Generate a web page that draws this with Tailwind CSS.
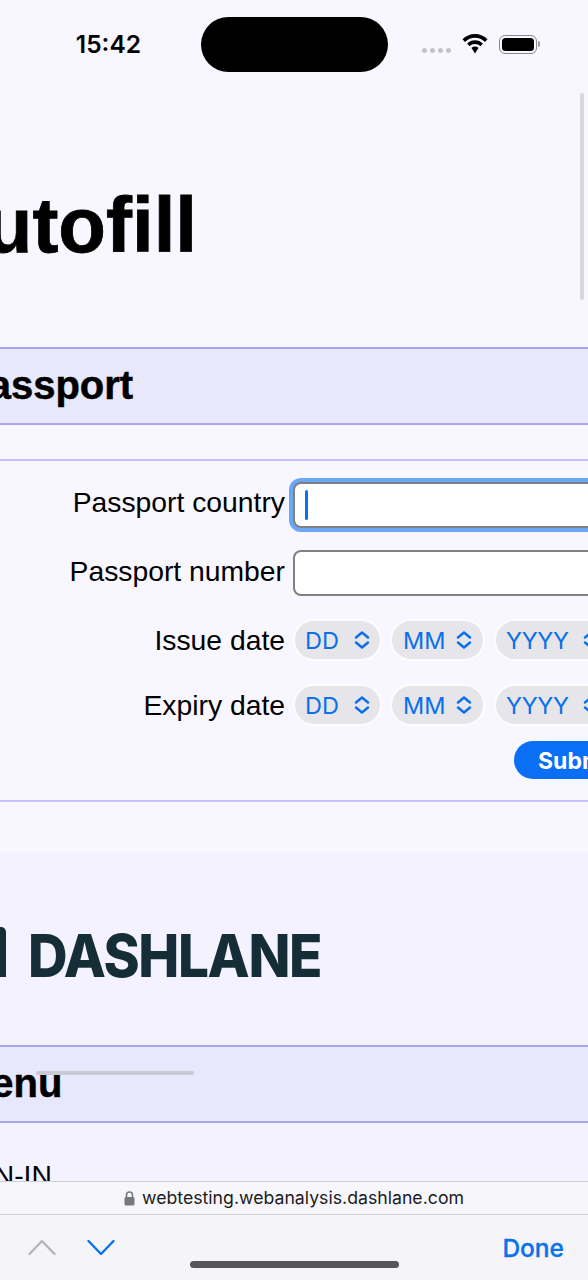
<!DOCTYPE html>
<html><head><meta charset="utf-8">
<script src="https://cdn.jsdelivr.net/npm/@tailwindcss/browser@4"></script>
<title>Autofill</title></head>
<body class="bg-[#f8f7ff]">
<div class="relative w-[588px] h-[1280px] overflow-hidden flex flex-col font-['Liberation_Sans',Arial,sans-serif] text-black">
  <!-- page content -->
  <div class="h-[1181px] flex-none overflow-hidden flex flex-col">
    <div class="h-[347px] flex-none flex flex-col">
      <div class="h-[93px] flex-none flex items-start">
        <span class="w-[141px] pt-[29px] text-right font-['Inter',sans-serif] font-semibold text-[24.500px] leading-[30px]">15:42</span>
        <div class="ml-[60px] mt-[17px] w-[187px] h-[55px] rounded-full bg-black"></div>
        <div class="ml-[34px] mt-[48px] flex gap-[3px] w-[33px]">
          <i class="w-[5px] h-[5px] rounded-full bg-[#c4c4ca]"></i><i class="w-[5px] h-[5px] rounded-full bg-[#c4c4ca]"></i><i class="w-[5px] h-[5px] rounded-full bg-[#c4c4ca]"></i><i class="w-[5px] h-[5px] rounded-full bg-[#c4c4ca]"></i>
        </div>
        <svg class="ml-[7px] mt-[34px]" width="26" height="20" viewBox="0 0 26 20"><path d="M13 0C8 0 3.800 2 .500 5.200L3 7.900C5.700 5.200 9.200 3.700 13 3.700S20.300 5.200 23 7.900L25.500 5.200C22.200 2 18 0 13 0Z" fill="#000"/><path d="M13 6.300C9.900 6.300 7.200 7.500 5.100 9.600L7.600 12.300C9 10.900 10.900 10 13 10S17 10.900 18.400 12.300L20.900 9.600C18.800 7.500 16.100 6.300 13 6.300Z" fill="#000"/><path d="M13 12.500C11.500 12.500 10.400 13 9.500 14L13 19.500L16.500 14C15.600 13 14.500 12.500 13 12.500Z" fill="#000"/></svg>
        <div class="ml-[11px] mt-[35px] w-[38px] h-[19px] rounded-[6px] border-[1.5px] border-[#8a8a8e] p-[2px]"><div class="w-full h-full rounded-[3.500px] bg-black"></div></div>
        <div class="ml-[1px] mt-[41px] w-[2px] h-[6px] rounded-r-full bg-[#9a9a9e]"></div>
      </div>
      <div class="h-[176px] flex-none w-[197px] flex justify-end items-center">
        <h1 class="whitespace-nowrap font-bold text-[78px] leading-[90px] pt-[88px] [-webkit-text-stroke:0.8px_black]">Autofill</h1>
      </div>
    </div>

    <div class="h-[78px] flex-none bg-[#e8e8fd] border-y-2 border-[#a9a5ea] w-full flex items-center">
      <h2 class="-ml-[38px] -mt-[2px] whitespace-nowrap font-bold text-[40px] leading-[46px] [-webkit-text-stroke:0.5px_black]">Passport</h2>
    </div>

    <form class="mt-[34px] h-[343px] flex-none border-y-2 border-[#c6c4f6] flex flex-col">
      <div class="mt-[21px] flex gap-[8px] items-center h-[46px]">
        <label class="w-[285px] flex-none text-right text-[28.300px] leading-[32px] -translate-y-[3px]">Passport country</label>
        <div class="flex-none w-[400px] h-[46px] rounded-[8px] bg-white border-2 border-[#808080] shadow-[0_0_0_4px_#6aa8f5] flex items-center pl-[10px]"><i class="w-[3px] h-[30px] rounded-full bg-[#0a6ff5]"></i></div>
      </div>
      <div class="mt-[22px] flex gap-[8px] items-center h-[46px]">
        <label class="w-[285px] flex-none text-right text-[28.300px] leading-[32px] -translate-y-[2px]">Passport number</label>
        <div class="flex-none w-[400px] h-[46px] rounded-[8px] bg-white border-2 border-[#808080]"></div>
      </div>
      <div class="mt-[25px] flex items-center h-[38px]">
        <label class="w-[285px] flex-none text-right text-[28.300px] leading-[32px]">Issue date</label>
        <div class="ml-[10px] flex-none w-[85px] h-[38px] rounded-full bg-[#e5e5ea] shadow-[0_0_0_2px_#fcfcff] flex items-center justify-between pl-[10px] pr-[9px] text-[#0a6fe8] font-['Inter',sans-serif] text-[23.500px] leading-[38px]"><span class="translate-y-[1px]">DD</span><svg width="18" height="18" viewBox="0 0 18 18" fill="none" stroke="#0a6fe8" stroke-width="2.400" stroke-linecap="round" stroke-linejoin="round"><path d="M3 6.500L9 1.500L15 6.500M3 11.500L9 16.500L15 11.500"/></svg></div>
        <div class="ml-[12px] flex-none w-[91px] h-[38px] rounded-full bg-[#e5e5ea] shadow-[0_0_0_2px_#fcfcff] flex items-center justify-between pl-[11px] pr-[10px] text-[#0a6fe8] font-['Inter',sans-serif] text-[23.500px] leading-[38px]"><span class="translate-y-[1px]">MM</span><svg width="18" height="18" viewBox="0 0 18 18" fill="none" stroke="#0a6fe8" stroke-width="2.400" stroke-linecap="round" stroke-linejoin="round"><path d="M3 6.500L9 1.500L15 6.500M3 11.500L9 16.500L15 11.500"/></svg></div>
        <div class="ml-[13px] flex-none w-[120px] h-[38px] rounded-full bg-[#e5e5ea] shadow-[0_0_0_2px_#fcfcff] flex items-center gap-[13px] pl-[10px] text-[#0a6fe8] font-['Inter',sans-serif] text-[23.500px] leading-[38px] tracking-[-0.300px]"><span class="translate-y-[1px]">YYYY</span><svg class="flex-none" width="18" height="18" viewBox="0 0 18 18" fill="none" stroke="#0a6fe8" stroke-width="2.400" stroke-linecap="round" stroke-linejoin="round"><path d="M3 6.500L9 1.500L15 6.500M3 11.500L9 16.500L15 11.500"/></svg></div>
      </div>
      <div class="mt-[27px] flex items-center h-[38px]">
        <label class="w-[285px] flex-none text-right text-[28.300px] leading-[32px]">Expiry date</label>
        <div class="ml-[10px] flex-none w-[85px] h-[38px] rounded-full bg-[#e5e5ea] shadow-[0_0_0_2px_#fcfcff] flex items-center justify-between pl-[10px] pr-[9px] text-[#0a6fe8] font-['Inter',sans-serif] text-[23.500px] leading-[38px]"><span class="translate-y-[1px]">DD</span><svg width="18" height="18" viewBox="0 0 18 18" fill="none" stroke="#0a6fe8" stroke-width="2.400" stroke-linecap="round" stroke-linejoin="round"><path d="M3 6.500L9 1.500L15 6.500M3 11.500L9 16.500L15 11.500"/></svg></div>
        <div class="ml-[12px] flex-none w-[91px] h-[38px] rounded-full bg-[#e5e5ea] shadow-[0_0_0_2px_#fcfcff] flex items-center justify-between pl-[11px] pr-[10px] text-[#0a6fe8] font-['Inter',sans-serif] text-[23.500px] leading-[38px]"><span class="translate-y-[1px]">MM</span><svg width="18" height="18" viewBox="0 0 18 18" fill="none" stroke="#0a6fe8" stroke-width="2.400" stroke-linecap="round" stroke-linejoin="round"><path d="M3 6.500L9 1.500L15 6.500M3 11.500L9 16.500L15 11.500"/></svg></div>
        <div class="ml-[13px] flex-none w-[120px] h-[38px] rounded-full bg-[#e5e5ea] shadow-[0_0_0_2px_#fcfcff] flex items-center gap-[13px] pl-[10px] text-[#0a6fe8] font-['Inter',sans-serif] text-[23.500px] leading-[38px] tracking-[-0.300px]"><span class="translate-y-[1px]">YYYY</span><svg class="flex-none" width="18" height="18" viewBox="0 0 18 18" fill="none" stroke="#0a6fe8" stroke-width="2.400" stroke-linecap="round" stroke-linejoin="round"><path d="M3 6.500L9 1.500L15 6.500M3 11.500L9 16.500L15 11.500"/></svg></div>
      </div>
      <div class="mt-[17px] ml-[514px] w-[140px] flex-none h-[38px] rounded-full bg-[#0a6ff5] text-white font-['Inter',sans-serif] font-bold text-[23px] leading-[40px] pl-[24px] whitespace-nowrap">Submit</div>
    </form>

    <div class="mt-[50px] h-[193px] flex-none bg-[#f3f2fe] flex items-start gap-[22px]">
      <div class="flex-none mt-[75px] w-[6px] h-[50px] rounded-tr-[5px] bg-[#152d37]"></div>
      <span class="mt-[74px] origin-left scale-x-[0.93] font-['Inter',sans-serif] font-extrabold text-[59px] leading-[60px] tracking-[-1.500px] text-[#152d37] whitespace-nowrap">DASHLANE</span>
    </div>

    <div class="h-[78px] flex-none bg-[#e8e8fd] border-y-2 border-[#a9a5ea] flex items-center">
      <h2 class="-ml-[42px] -mt-[2px] whitespace-nowrap font-bold text-[40px] leading-[46px] [-webkit-text-stroke:0.5px_black]">Menu</h2>
    </div>

    <div class="flex-1 bg-[#f3f2fe] pt-[36px]">
      <div class="-ml-[55px] text-[28.300px] leading-[32px] whitespace-nowrap">SIGN-IN</div>
    </div>
  </div>

  <!-- browser url bar -->
  <div class="h-[34px] flex-none bg-[#f7f7fb] border-y border-[#cfcfd6] flex items-center justify-center gap-[7px] font-['Inter',sans-serif] text-[#1c1c1e] text-[17.700px] leading-[24px]">
    <svg width="11" height="15" viewBox="0 0 11 15"><path d="M2.500 6.500V4a3 3 0 0 1 6 0V6.500" fill="none" stroke="#77777d" stroke-width="1.600"/><rect x="0.500" y="6" width="10" height="8.500" rx="1.500" fill="#77777d"/></svg>
    <span class="whitespace-nowrap">webtesting.webanalysis.dashlane.com</span>
  </div>
  <!-- keyboard accessory bar -->
  <div class="flex-1 bg-[#f5f5f9] flex items-start pt-[24px] pl-[28px] pr-[24px]">
    <svg width="28" height="17" viewBox="0 0 28 17" fill="none" stroke="#b5b5b9" stroke-width="2.400" stroke-linecap="round" stroke-linejoin="round"><path d="M1.500 15L14 2L26.500 15"/></svg>
    <svg class="ml-[31px]" width="28" height="17" viewBox="0 0 28 17" fill="none" stroke="#0a72e8" stroke-width="2.400" stroke-linecap="round" stroke-linejoin="round"><path d="M1.500 2L14 15L26.500 2"/></svg>
    <span class="ml-auto -mt-[6px] font-['Inter',sans-serif] font-medium text-[24.500px] leading-[30px] text-[#0a72e8] [-webkit-text-stroke:0.3px_#0a72e8]">Done</span>
  </div>

  <!-- overlays -->
  <div class="absolute left-[580px] top-[93px] w-[4px] h-[207px] rounded-full bg-[#d6d6dc]"></div>
  <div class="absolute left-[36px] top-[1071px] w-[158px] h-[4px] rounded-full bg-[#c9c9d2]"></div>
  <div class="absolute left-[190px] top-[1261px] w-[209px] h-[7px] rounded-full bg-[#55555a]"></div>
</div>
</body></html>
